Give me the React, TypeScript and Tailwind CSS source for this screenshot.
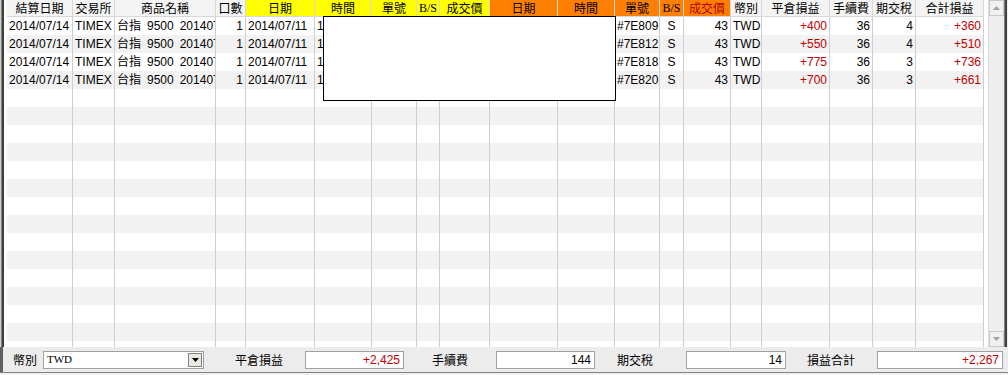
import React from "react";

type Col = { w: number; label: string; bg?: string; color?: string };

const cols: Col[] = [
  { w: 66, label: "結算日期" },
  { w: 42, label: "交易所" },
  { w: 101, label: "商品名稱" },
  { w: 30, label: "口數" },
  { w: 69, label: "日期", bg: "#ffff00" },
  { w: 57, label: "時間", bg: "#ffff00" },
  { w: 45, label: "單號", bg: "#ffff00" },
  { w: 23, label: "B/S", bg: "#ffff00" },
  { w: 50, label: "成交價", bg: "#ffff00" },
  { w: 68, label: "日期", bg: "#ff8000" },
  { w: 57, label: "時間", bg: "#ff8000" },
  { w: 45, label: "單號", bg: "#ff8000" },
  { w: 24, label: "B/S", bg: "#ff8000" },
  { w: 47, label: "成交價", bg: "#ff8000", color: "#b00000" },
  { w: 31, label: "幣別" },
  { w: 68, label: "平倉損益" },
  { w: 43, label: "手續費" },
  { w: 43, label: "期交稅" },
  { w: 68, label: "合計損益" },
];

type Cell = { t: string; a?: "l" | "r" | "c"; red?: boolean };

const data: Cell[][] = [
  ["#7E809", "+400", "36", "4", "+360"],
  ["#7E812", "+550", "36", "4", "+510"],
  ["#7E818", "+775", "36", "3", "+736"],
  ["#7E820", "+700", "36", "3", "+661"],
].map(([no, pl, fee, tax, tot]) => [
  { t: "2014/07/14", a: "l" },
  { t: "TIMEX", a: "l" },
  { t: "台指\u20029500\u2002201407", a: "l" },
  { t: "1", a: "r" },
  { t: "2014/07/11", a: "l" },
  { t: "1", a: "l" },
  { t: "", a: "l" },
  { t: "", a: "c" },
  { t: "", a: "r" },
  { t: "", a: "l" },
  { t: "", a: "l" },
  { t: no, a: "l" },
  { t: "S", a: "c" },
  { t: "43", a: "r" },
  { t: "TWD", a: "l" },
  { t: pl, a: "r", red: true },
  { t: fee, a: "r" },
  { t: tax, a: "r" },
  { t: tot, a: "r", red: true },
]);

const FONT = '"Liberation Sans", "Noto Sans CJK TC", sans-serif';
const CJK = '"Noto Sans CJK TC", "Liberation Sans", sans-serif';

function Tri({ up }: { up?: boolean }) {
  return (
    <svg width="7" height="4" viewBox="0 0 7 4">
      {up ? <polygon points="0,4 7,4 3.5,0" fill="#a0a0a0" /> : <polygon points="0,0 7,0 3.5,4" fill="#a0a0a0" />}
    </svg>
  );
}

export default function App() {
  const totalRows = 19;
  return (
    <div className="w-[1008px] h-[375px] overflow-hidden bg-[#ececec] relative flex flex-col" style={{ fontFamily: FONT }}>
      <div className="flex h-[347px]">
        {/* left border */}
        <div className="w-[1px] bg-[#d4d0c8]" />
        <div className="w-[1px] bg-[#808080]" />
        <div className="w-[2px] bg-[#404040]" />
        <div className="w-[3px] bg-[#ffffff]" />
        {/* grid */}
        <div className="relative flex flex-col w-[977px] bg-white">
          {/* header */}
          <div className="flex h-[17px] border-b border-[#d8d8d8]">
            {cols.map((c, i) => (
              <div
                key={i}
                className="h-full flex items-center justify-center text-[12px] leading-none border-r border-[#d8d8d8] shrink-0"
                style={{ width: c.w, background: c.bg ?? "#f4f4f4", color: c.color ?? "#000", fontFamily: i === 7 || i === 12 ? '"Liberation Serif", serif' : CJK }}
              >
                {c.label}
              </div>
            ))}
          </div>
          {/* body */}
          <div className="flex flex-col h-[330px] overflow-hidden">
            {Array.from({ length: totalRows }).map((_, r) => {
              const row = data[r];
              return (
                <div key={r} className={`flex h-[18px] shrink-0 ${r % 2 === 1 ? "bg-[#f2f2f2]" : "bg-white"}`}>
                  {cols.map((c, i) => {
                    const cell = row?.[i];
                    const align = cell?.a === "r" ? "justify-end pr-[2px]" : cell?.a === "c" ? "justify-center" : "justify-start pl-[2px]";
                    return (
                      <div
                        key={i}
                        className={`h-full flex items-center overflow-hidden whitespace-nowrap text-[12px] leading-none border-r border-[#cfcfcf] shrink-0 ${align}`}
                        style={{ width: c.w, color: cell?.red ? "#c00000" : "#000" }}
                      >
                        {cell?.t ?? ""}
                      </div>
                    );
                  })}
                </div>
              );
            })}
          </div>
          {/* overlay popup */}
          <div className="absolute left-[316px] top-[16px] w-[293px] h-[85px] bg-white border border-black" />
        </div>
        {/* scrollbar */}
        <div className="w-[4px] bg-white" />
        <div className="w-[16px] flex flex-col bg-[#eeeeee] border-l border-[#dcdcdc]">
          <div className="h-[16px] flex items-center justify-center bg-[#f0f0f0] border border-[#c8c8c8]">
            <Tri up />
          </div>
          <div className="flex-1" />
          <div className="h-[16px] flex items-center justify-center bg-[#f0f0f0] border border-[#c8c8c8]">
            <Tri />
          </div>
        </div>
        <div className="w-[1px] bg-[#808080]" />
        <div className="w-[2px] bg-[#404040]" />
      </div>
      {/* bottom panel */}
      <div className="flex items-center h-[25px] border-l-[3px] border-[#606060] text-[12px]" style={{ fontFamily: CJK }}>
        <span className="ml-[10px] w-[30px]">幣別</span>
        <div className="w-[161px] h-[18px] bg-white border border-[#a0a0a0] flex items-center justify-between pl-[3px] pr-[1px]">
          <span style={{ fontFamily: '"Liberation Serif", serif' }} className="text-[11px]">TWD</span>
          <div className="w-[14px] h-[14px] bg-[#ece9e0] border border-[#808080] flex items-center justify-center">
            <svg width="7" height="4" viewBox="0 0 7 4"><polygon points="0,0 7,0 3.5,4" fill="#000" /></svg>
          </div>
        </div>
        <span className="ml-[31px] w-[70px]">平倉損益</span>
        <div className="w-[99px] h-[18px] bg-white border border-[#a0a0a0] flex items-center justify-end pr-[3px] text-[#c00000]" style={{ fontFamily: FONT }}>+2,425</div>
        <span className="ml-[28px] w-[64px]">手續費</span>
        <div className="w-[99px] h-[18px] bg-white border border-[#a0a0a0] flex items-center justify-end pr-[3px]" style={{ fontFamily: FONT }}>144</div>
        <span className="ml-[22px] w-[69px]">期交稅</span>
        <div className="w-[100px] h-[18px] bg-white border border-[#a0a0a0] flex items-center justify-end pr-[3px]" style={{ fontFamily: FONT }}>14</div>
        <span className="ml-[21px] w-[70px]">損益合計</span>
        <div className="w-[126px] h-[18px] bg-white border border-[#a0a0a0] flex items-center justify-end pr-[3px] text-[#c00000]" style={{ fontFamily: FONT }}>+2,267</div>
      </div>
      <div className="h-[1px] bg-[#808080]" />
      <div className="h-[2px] bg-[#f0f0f0]" />
    </div>
  );
}
